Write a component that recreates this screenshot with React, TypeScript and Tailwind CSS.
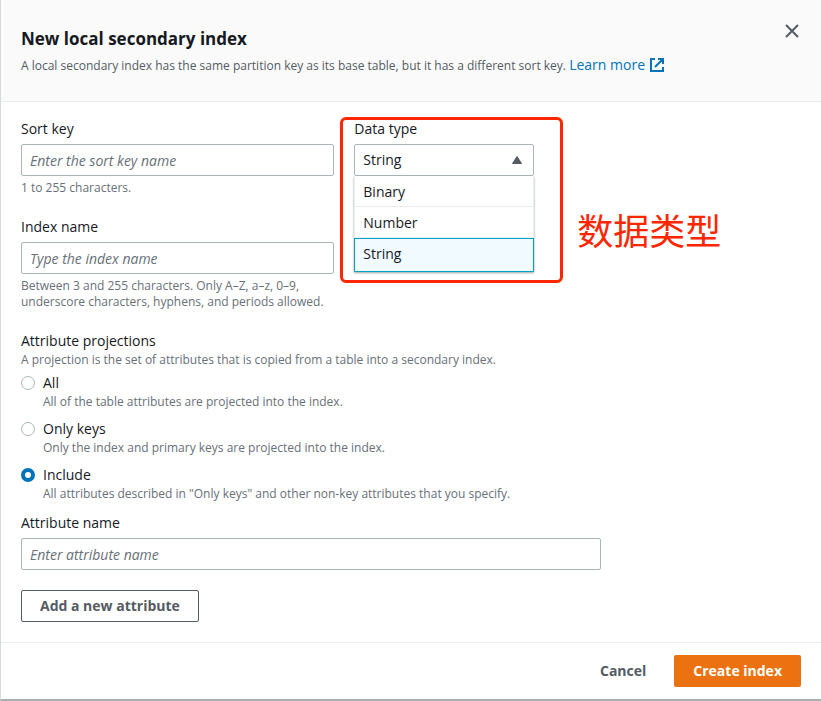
import { useState } from 'react';
import type { ReactNode } from 'react';

const DATA_TYPES = ['Binary', 'Number', 'String'];

const PROJECTIONS = [
  { id: 'all', label: 'All', hint: 'All of the table attributes are projected into the index.' },
  { id: 'keys', label: 'Only keys', hint: 'Only the index and primary keys are projected into the index.' },
  {
    id: 'include',
    label: 'Include',
    hint: 'All attributes described in "Only keys" and other non-key attributes that you specify.',
  },
];

const inputClass =
  'block h-8 w-full rounded-xs border border-[#aab7b8] bg-white px-2 text-sm text-[#16191f] placeholder:italic placeholder:text-[#687078]';

function Hint({ id, children }: { id?: string; children: ReactNode }) {
  return (
    <p id={id} className="text-xs leading-4 text-[#687078]">
      {children}
    </p>
  );
}

function TextField({ id, label, placeholder, hint }: { id: string; label: string; placeholder: string; hint?: string }) {
  return (
    <div className="flex flex-col gap-1">
      <label htmlFor={id} className="text-sm leading-[22px]">
        {label}
      </label>
      <input id={id} type="text" placeholder={placeholder} className={inputClass} />
      {hint && <Hint>{hint}</Hint>}
    </div>
  );
}

function DataTypeSelect() {
  const [value, setValue] = useState('String');
  return (
    <div className="relative flex flex-col gap-1">
      <label htmlFor="data-type" className="text-sm leading-[22px]">
        Data type
      </label>
      <div className="relative">
        <select
          id="data-type"
          value={value}
          onChange={(e) => setValue(e.target.value)}
          className="block h-8 w-full appearance-none rounded-xs border border-[#aab7b8] bg-white px-2 text-sm text-[#16191f]"
        >
          {DATA_TYPES.map((type) => (
            <option key={type}>{type}</option>
          ))}
        </select>
        <svg viewBox="0 0 12 10" className="pointer-events-none absolute top-[11px] right-[11px] h-[10px] w-3" aria-hidden="true">
          <path d="M6 1.5 10.5 8.5H1.5Z" fill="#545b64" stroke="#545b64" strokeLinejoin="round" />
        </svg>
        <ul
          role="listbox"
          aria-label="Data type"
          className="absolute inset-x-0 top-full z-10 bg-white text-sm shadow-[0_1px_2px_rgba(0,28,36,0.4)]"
        >
          {DATA_TYPES.map((type) => (
            <li
              key={type}
              role="option"
              aria-selected={type === value}
              onClick={() => setValue(type)}
              className={
                type === value
                  ? 'h-[34px] border border-[#00a1c9] bg-[#f1faff] px-2 leading-[30px]'
                  : 'h-[31px] border-x border-b border-[#eaeded] px-2 leading-[31px]'
              }
            >
              {type}
            </li>
          ))}
        </ul>
      </div>
      <div className="pointer-events-none absolute -top-px -right-[29px] -left-[14px] z-20 h-[166px] rounded-md border-3 border-[#ff2600]" />
      <p className="absolute top-[85px] left-[223px] font-['Noto_Sans_CJK_SC',sans-serif] text-4xl leading-[52px] whitespace-nowrap text-[#ff2600]">
        数据类型
      </p>
    </div>
  );
}

export default function App() {
  const [projection, setProjection] = useState('include');
  return (
    <main
      role="dialog"
      aria-labelledby="dialog-title"
      className="border-b-2 border-l border-b-[#a9afb2] border-l-[#d5dbdb] bg-white font-['Open_Sans','Noto_Sans_CJK_SC',sans-serif] text-[#16191f]"
    >
      <header className="flex items-start justify-between border-b border-[#eaeded] bg-[#fafafa] px-5 pt-7 pb-6">
        <div>
          <h1 id="dialog-title" className="text-[17px] leading-[22px] font-bold">
            New local secondary index
          </h1>
          <p className="mt-1 text-xs leading-[22px] text-[#545b64]">
            A local secondary index has the same partition key as its base table, but it has a different sort key.{' '}
            <a href="#learn-more" className="inline-flex items-center gap-1 text-sm leading-[22px] text-[#0073bb]">
              Learn more
              <svg viewBox="0 0 16 16" className="size-4" fill="none" stroke="currentColor" strokeWidth="2" aria-hidden="true">
                <path d="M6 2H2v12h12v-4M9 2h5v5M6 10l8-8" />
              </svg>
            </a>
          </p>
        </div>
        <button type="button" aria-label="Close" className="-mt-1.5 p-px text-[#545b64]">
          <svg viewBox="0 0 16 16" className="size-4" fill="none" stroke="currentColor" strokeWidth="2" aria-hidden="true">
            <path d="m2 2 12 12M14 2 2 14" />
          </svg>
        </button>
      </header>

      <form>
        <div className="px-5 pt-4 pb-5">
          <div className="grid grid-cols-12 gap-5">
            <div className="col-span-5">
              <TextField id="sort-key" label="Sort key" placeholder="Enter the sort key name" hint="1 to 255 characters." />
            </div>
            <div className="col-span-3">
              <DataTypeSelect />
            </div>
            <div className="col-span-5 col-start-1">
              <TextField
                id="index-name"
                label="Index name"
                placeholder="Type the index name"
                hint="Between 3 and 255 characters. Only A–Z, a–z, 0–9, underscore characters, hyphens, and periods allowed."
              />
            </div>
          </div>

          <fieldset className="mt-5">
            <legend className="text-sm leading-[22px]">Attribute projections</legend>
            <Hint>A projection is the set of attributes that is copied from a table into a secondary index.</Hint>
            <div className="mt-1 flex flex-col gap-2">
              {PROJECTIONS.map(({ id, label, hint }) => (
                <div key={id} className="grid grid-cols-[14px_1fr] gap-x-2">
                  <input
                    id={id}
                    type="radio"
                    name="projection"
                    checked={projection === id}
                    onChange={() => setProjection(id)}
                    aria-describedby={`${id}-hint`}
                    className="size-[14px] appearance-none self-center rounded-full border border-[#aab7b8] bg-white checked:border-4 checked:border-[#0073bb]"
                  />
                  <label htmlFor={id} className="text-sm leading-[22px]">
                    {label}
                  </label>
                  <div className="col-start-2">
                    <Hint id={`${id}-hint`}>{hint}</Hint>
                  </div>
                </div>
              ))}
            </div>
          </fieldset>

          <div className="mt-[10px] grid grid-cols-12 gap-x-5">
            <div className="col-span-9">
              <TextField id="attribute-name" label="Attribute name" placeholder="Enter attribute name" />
            </div>
          </div>
          <button
            type="button"
            className="mt-5 block h-8 rounded-xs border border-[#545b64] bg-white px-[18px] text-sm font-bold text-[#545b64]"
          >
            Add a new attribute
          </button>
        </div>

        <footer className="flex justify-end gap-[10px] border-t border-[#eaeded] py-3 pr-5">
          <button type="button" className="h-8 px-[18px] text-sm font-bold text-[#545b64]">
            Cancel
          </button>
          <button type="submit" className="h-8 rounded-xs bg-[#ec7211] px-[19px] text-sm font-bold text-white">
            Create index
          </button>
        </footer>
      </form>
    </main>
  );
}
